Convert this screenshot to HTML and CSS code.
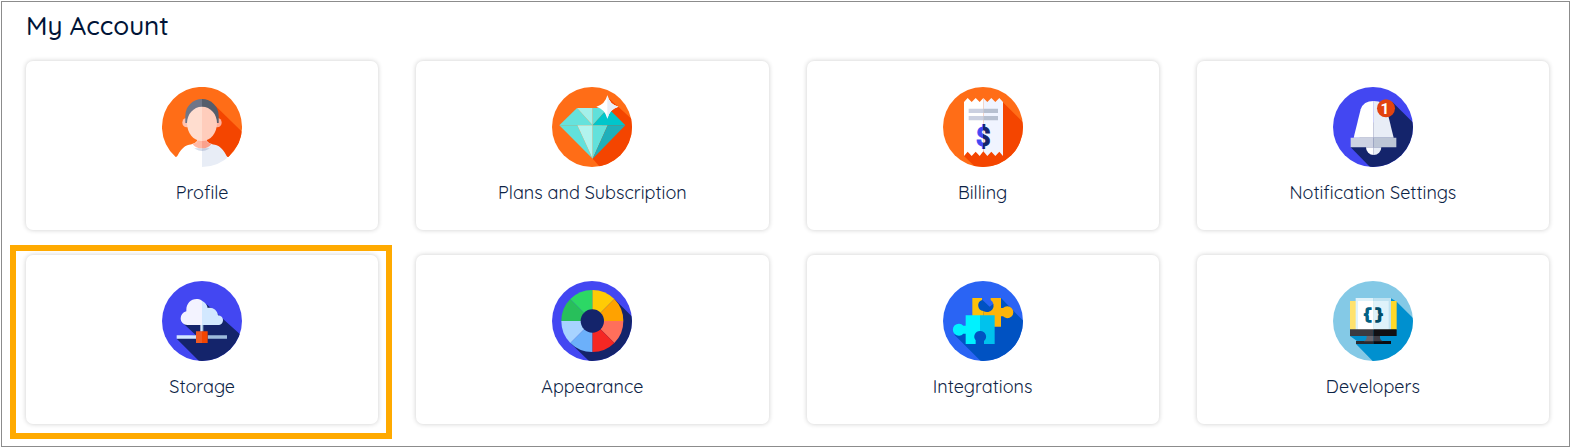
FILE: index.html
```html
<!DOCTYPE html>
<html lang="en">
<head>
    <meta charset="UTF-8">
    <meta name="viewport" content="width=device-width, initial-scale=1.0">
    <title>My Account</title>
    <link rel="stylesheet" href="styles.css">
</head>
<body>
    <main class="account">
        <h1>My Account</h1>
        <div class="cards">
            <a class="card" href="#profile">
                <svg class="icon" viewBox="0 0 240 240" aria-hidden="true">
                    <clipPath id="round"><circle cx="120" cy="120" r="120"/></clipPath>
                    <path d="M41 210A120 120 0 1 1 199 210L120 180Z" fill="#ff6d17"/>
                    <g clip-path="url(#round)">
                        <path d="M160 56L250 144L199 211L130 165Z" fill="#f44500"/>
                        <path d="M34 240C44 205 58 182 76 175C90 170 104 170 106 158H120V240Z" fill="#fff"/>
                        <path d="M206 240C196 205 182 182 164 175C150 170 136 170 134 158H120V240Z" fill="#e8edf6"/>
                        <path d="M86 172Q99 192 120 192V184H96Z" fill="#d5dcea"/>
                        <path d="M154 172Q141 192 120 192V184H144Z" fill="#c3cbdd"/>
                        <path d="M106 152V162Q104 168 91 170Q101 184 120 184V152Z" fill="#ffb9a5"/>
                        <path d="M134 152V162Q136 168 149 170Q139 184 120 184V152Z" fill="#faa18c"/>
                        <ellipse cx="74" cy="107" rx="13" ry="14" fill="#ffc2b0"/>
                        <ellipse cx="166" cy="107" rx="13" ry="14" fill="#ffb09c"/>
                        <path d="M70 108V86A50 50 0 0 1 120 36V70L78 108Z" fill="#6f7688"/>
                        <path d="M170 108V86A50 50 0 0 0 120 36V70L162 108Z" fill="#555d6b"/>
                        <path d="M120 59C94 59 75 82 75 108C75 138 94 162 120 162Z" fill="#ffddcf"/>
                        <path d="M120 59C146 59 165 82 165 108C165 138 146 162 120 162Z" fill="#ffcdbc"/>
                    </g>
                </svg>
                <span>Profile</span>
            </a>
            <a class="card" href="#plans">
                <svg class="icon" viewBox="0 0 240 240" aria-hidden="true">
                    <g clip-path="url(#round)">
                        <rect width="240" height="240" fill="#ff6d17"/>
                        <path d="M172 35L250 106V240H144L122 215Z" fill="#f44500"/>
                        <path d="M75 63L22 115H122Z" fill="#66e2dc"/>
                        <path d="M75 63H122V115Z" fill="#a4f0ea"/>
                        <path d="M122 63H168L122 115Z" fill="#5fe0da"/>
                        <path d="M168 63L220 115H122Z" fill="#00c6cb"/>
                        <path d="M22 115H76L122 215Z" fill="#62e1db"/>
                        <path d="M76 115H122V215Z" fill="#b2f4ee"/>
                        <path d="M122 115H167L122 215Z" fill="#62e1db"/>
                        <path d="M167 115H220L122 215Z" fill="#1fafba"/>
                        <path d="M166 25Q173 53 199 59Q173 66 166 95Q159 66 133 59Q159 53 166 25Z" fill="#fff"/>
                        <path d="M166 25Q173 53 199 59Q173 66 166 95Z" fill="#e8edf6"/>
                    </g>
                </svg>
                <span>Plans and Subscription</span>
            </a>
            <a class="card" href="#billing">
                <svg class="icon" viewBox="0 0 240 240" aria-hidden="true">
                    <linearGradient id="dollar" gradientUnits="userSpaceOnUse" x1="98" x2="144">
                        <stop offset="50%" stop-color="#4347f2"/>
                        <stop offset="50%" stop-color="#14246b"/>
                    </linearGradient>
                    <g clip-path="url(#round)">
                        <rect width="240" height="240" fill="#ff6d17"/>
                        <path d="M178 44L250 116V240H97L63 207Z" fill="#f44500"/>
                        <path d="M63 45L74 33L86 45L98 33L110 45L121 33V193L110 207L98 194L86 207L74 194L63 207Z" fill="#fff"/>
                        <path d="M121 33L133 45L145 33L157 45L169 33L180 45V207L169 194L157 207L145 194L133 207L121 193Z" fill="#f0f4ff"/>
                        <path d="M77 65H121V78H77ZM77 87H121V100H77Z" fill="#cbd0e0"/>
                        <path d="M121 65H165V78H121ZM121 87H165V100H121Z" fill="#b7c0d0"/>
                        <text class="dollar" x="121" y="176" fill="url(#dollar)" stroke="url(#dollar)">$</text>
                    </g>
                </svg>
                <span>Billing</span>
            </a>
            <a class="card" href="#notifications">
                <svg class="icon" viewBox="0 0 240 240" aria-hidden="true">
                    <g clip-path="url(#round)">
                        <rect width="240" height="240" fill="#4347f2"/>
                        <path d="M178 45L250 116V240H111L53 181Z" fill="#14246b"/>
                        <path d="M99 181A23 23 0 0 0 122 204V181Z" fill="#fff"/>
                        <path d="M145 181A23 23 0 0 1 122 204V181Z" fill="#e8edf6"/>
                        <path d="M62 152L83 67Q91 42 122 42V152Z" fill="#fff"/>
                        <path d="M182 152L161 67Q153 42 122 42V152Z" fill="#e8edf6"/>
                        <path d="M53 152H122V181H53Z" fill="#cdd2e2"/>
                        <path d="M122 152H190V181H122Z" fill="#bcc5d5"/>
                        <circle cx="159" cy="64" r="27" fill="#e2430f"/>
                        <text class="count" x="156" y="81">1</text>
                    </g>
                </svg>
                <span>Notification Settings</span>
            </a>
            <a class="card selected" href="#storage">
                <svg class="icon" viewBox="0 0 240 240" aria-hidden="true">
                    <g clip-path="url(#round)">
                        <rect width="240" height="240" fill="#4347f2"/>
                        <path d="M134 70L250 174V240H111L44 173L94 163L66 131Z" fill="#14246b"/>
                        <path d="M44 173L52 165L94 163H102L68 131L44 160Z" fill="#4347f2"/>
                        <path d="M120 59C114 55 108 54 104 54C86 54 73 68 73 86V91C62 94 56 102 56 112C56 124 65 132 76 132H120Z" fill="#f3f3ff"/>
                        <path d="M120 59C130 64 136 72 137 81C151 77 166 87 168 103C177 104 183 110 183 117C183 126 177 132 168 132H120Z" fill="#d2e8ff"/>
                        <path d="M115 132H120V152H115Z" fill="#dbe8fa"/>
                        <path d="M120 132H124V152H120Z" fill="#a4c2dc"/>
                        <path d="M44 163H103V173H44Z" fill="#d3e7ff"/>
                        <path d="M137 163H195V173H137Z" fill="#9dbbdc"/>
                        <path d="M102 151H120V186H102Z" fill="#ef5a24"/>
                        <path d="M120 151H137V186H120Z" fill="#f44500"/>
                    </g>
                </svg>
                <span>Storage</span>
            </a>
            <a class="card" href="#appearance">
                <svg class="icon" viewBox="0 0 240 240" aria-hidden="true">
                    <g clip-path="url(#round)">
                        <rect width="240" height="240" fill="#4347f2"/>
                        <path d="M187 54L250 116V240H111L55 186Z" fill="#14246b"/>
                        <path d="M121 120V27A93 93 0 0 1 187 54Z" fill="#ffcb05"/>
                        <path d="M121 120L187 54A93 93 0 0 1 214 120Z" fill="#ffa200"/>
                        <path d="M121 120H214A93 93 0 0 1 187 186Z" fill="#ff6f5b"/>
                        <path d="M121 120L187 186A93 93 0 0 1 121 213Z" fill="#f52723"/>
                        <path d="M121 120V213A93 93 0 0 1 55 186Z" fill="#6cb0fa"/>
                        <path d="M121 120L55 186A93 93 0 0 1 28 120Z" fill="#a7d3ff"/>
                        <path d="M121 120H28A93 93 0 0 1 55 54Z" fill="#28bf5b"/>
                        <path d="M121 120L55 54A93 93 0 0 1 121 27Z" fill="#2cd865"/>
                        <circle cx="121" cy="120" r="35" fill="#14246b"/>
                    </g>
                </svg>
                <span>Appearance</span>
            </a>
            <a class="card" href="#integrations">
                <svg class="icon" viewBox="0 0 240 240" aria-hidden="true">
                    <g clip-path="url(#round)">
                        <rect width="240" height="240" fill="#2a64f4"/>
                        <path d="M112 51L140 77L174 51L250 129V240H113L34 161L88 120Z" fill="#0052c2"/>
                        <path d="M88 51H117V57A17 17 0 0 0 121 90V137H88Z" fill="#ffc107"/>
                        <path d="M121 90A17 17 0 0 0 143 57V51H174V81H180A18 18 0 1 1 180 106H174V137H121Z" fill="#fdb40a"/>
                        <path d="M68 103H112V150A17 17 0 0 0 98 178V189H68V158H61A18 18 0 1 1 61 134H68Z" fill="#00f2ff"/>
                        <path d="M111 103H155V189H123V180A17 17 0 0 0 111 150Z" fill="#00c2ed"/>
                    </g>
                </svg>
                <span>Integrations</span>
            </a>
            <a class="card" href="#developers">
                <svg class="icon" viewBox="0 0 240 240" aria-hidden="true">
                    <g clip-path="url(#round)">
                        <rect width="240" height="240" fill="#84c9e6"/>
                        <path d="M174 52L191 62L250 121V240H119L69 189L72 180L51 165Z" fill="#0090cf"/>
                        <path d="M51 60H121V146H51Z" fill="#ffe26d"/>
                        <path d="M121 60H191V146H121Z" fill="#ffd829"/>
                        <path d="M68 51H121V146H68Z" fill="#dff2fa"/>
                        <path d="M121 51H174V146H121Z" fill="#bfe2f1"/>
                        <path d="M75 60H121V146H75Z" fill="#fff"/>
                        <path d="M121 60H167V146H121Z" fill="#dff2fa"/>
                        <path d="M51 145H121V165H51Z" fill="#3b3a41"/>
                        <path d="M121 145H191V165H121Z" fill="#111013"/>
                        <path d="M69 180H121V189H69Z" fill="#29292f"/>
                        <path d="M121 180H174V189H121Z" fill="#0b0b10"/>
                        <path d="M101 165H121V181H92Q102 178 101 165Z" fill="#68666e"/>
                        <path d="M141 165H121V181H150Q140 178 141 165Z" fill="#3e3d45"/>
                        <text class="brace" x="104" y="115" fill="#006084" stroke="#006084">{</text>
                        <text class="brace" x="138" y="115" fill="#004d69" stroke="#004d69">}</text>
                    </g>
                </svg>
                <span>Developers</span>
            </a>
        </div>
    </main>
</body>
</html>
```
FILE: styles.css
```css
* {
    box-sizing: border-box;
}
body {
    margin: 0;
    padding: 1px;
    font-family: Quicksand, Lato, sans-serif;
    background-color: #fff;
}
.account {
    padding: 8px 20px 22px 24px;
    border: 1px solid #8c8c8c;
}
h1 {
    margin: 0 0 19px;
    font-size: 26px;
    font-weight: 500;
    line-height: 32px;
    color: #001437;
}
.cards {
    display: grid;
    grid-template-columns: repeat(4, 1fr);
    gap: 25px 38px;
}
.card {
    position: relative;
    display: flex;
    flex-direction: column;
    align-items: center;
    gap: 14px;
    padding: 26px 16px;
    border-radius: 7px;
    background-color: #fff;
    box-shadow: 0 0 5px rgba(0, 0, 0, 0.2);
    font-size: 18px;
    font-weight: 400;
    line-height: 23px;
    color: #0c2345;
    text-decoration: none;
}
/* orange frame around the chosen card */
.selected::after {
    content: "";
    position: absolute;
    inset: -10px -14px -15px -16px;
    border: 6px solid #ffaa00;
}
.icon {
    width: 80px;
    height: 80px;
}
.icon text {
    font-family: Roboto, sans-serif;
    font-weight: 700;
    text-anchor: middle;
}
.dollar {
    font-size: 76px;
    stroke-width: 3px;
}
.count {
    font-size: 46px;
    fill: #fff;
}
.icon .brace {
    font-family: "Liberation Mono", monospace;
    font-size: 46px;
    stroke-width: 4px;
}
```
